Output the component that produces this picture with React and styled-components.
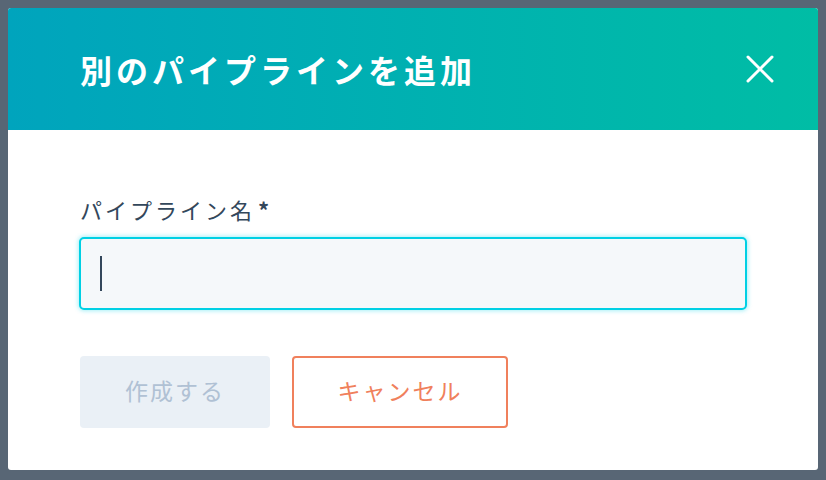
import React from 'react';
import styled, { createGlobalStyle } from 'styled-components';

const GlobalStyle = createGlobalStyle`
  html, body {
    margin: 0;
    padding: 0;
    background: #586675;
  }
  body {
    font-family: "Noto Sans CJK JP", "Noto Sans", sans-serif;
    color: #33475b;
  }
`;

const Page = styled.div`
  width: 826px;
  height: 480px;
  padding: 8px;
  box-sizing: border-box;
`;

const Dialog = styled.div`
  width: 810px;
  height: 462px;
  background: #ffffff;
  border-radius: 3px;
  overflow: hidden;
  display: flex;
  flex-direction: column;
`;

const Header = styled.header`
  height: 122px;
  flex-shrink: 0;
  display: flex;
  align-items: center;
  justify-content: space-between;
  padding: 0 44px 0 72px;
  background: linear-gradient(to right, #00a4bd, #00bda5);
`;

const Title = styled.h1`
  margin: 0;
  font-size: 32px;
  font-weight: 700;
  letter-spacing: 4px;
  color: #ffffff;
  line-height: 1;
`;

const CloseButton = styled.button`
  width: 28px;
  height: 28px;
  padding: 0;
  border: none;
  background: transparent;
  cursor: pointer;
  display: flex;

  svg {
    width: 28px;
    height: 28px;
  }
`;

const Body = styled.div`
  padding: 64px 71px 0 72px;
  display: flex;
  flex-direction: column;
`;

const Label = styled.label`
  font-size: 22px;
  line-height: 30px;
  letter-spacing: 3px;
  color: #33475b;
  margin-bottom: 13px;

  span {
    font-weight: 700;
    margin-left: 3px;
  }
`;

const Field = styled.div`
  height: 73px;
  box-sizing: border-box;
  border: 2px solid #00d0e4;
  border-radius: 5px;
  background: #f5f8fa;
  box-shadow: 0 0 4px 1px rgba(0, 208, 228, 0.35);
  display: flex;
  align-items: center;
  padding-left: 19px;
  margin-left: -1px;
`;

const Caret = styled.span`
  width: 2px;
  height: 35px;
  background: #33475b;
`;

const Actions = styled.div`
  display: flex;
  gap: 22px;
  margin-top: 46px;
`;

const Button = styled.button`
  height: 72px;
  width: ${p => p.$width}px;
  box-sizing: border-box;
  padding: 0 0 5px;
  border-radius: 4px;
  font-family: inherit;
  font-size: 23px;
  letter-spacing: 2px;
  cursor: ${p => (p.disabled ? 'default' : 'pointer')};
  background: ${p => (p.$variant === 'secondary' ? '#ffffff' : '#eaf0f6')};
  color: ${p => (p.$variant === 'secondary' ? '#f0805c' : '#b0c1d4')};
  border: ${p => (p.$variant === 'secondary' ? '2px solid #f0805c' : 'none')};
`;

const App = () => {
  return (
    <>
      <GlobalStyle />
      <Page>
        <Dialog>
          <Header>
            <Title>別のパイプラインを追加</Title>
            <CloseButton aria-label="閉じる">
              <svg viewBox="0 0 28 28" fill="none" stroke="#ffffff" strokeWidth="3" strokeLinecap="round">
                <path d="M2 2L26 26M26 2L2 26" />
              </svg>
            </CloseButton>
          </Header>
          <Body>
            <Label>パイプライン名<span>*</span></Label>
            <Field>
              <Caret />
            </Field>
            <Actions>
              <Button $width={190} disabled>作成する</Button>
              <Button $width={216} $variant="secondary">キャンセル</Button>
            </Actions>
          </Body>
        </Dialog>
      </Page>
    </>
  );
};

export default App;
